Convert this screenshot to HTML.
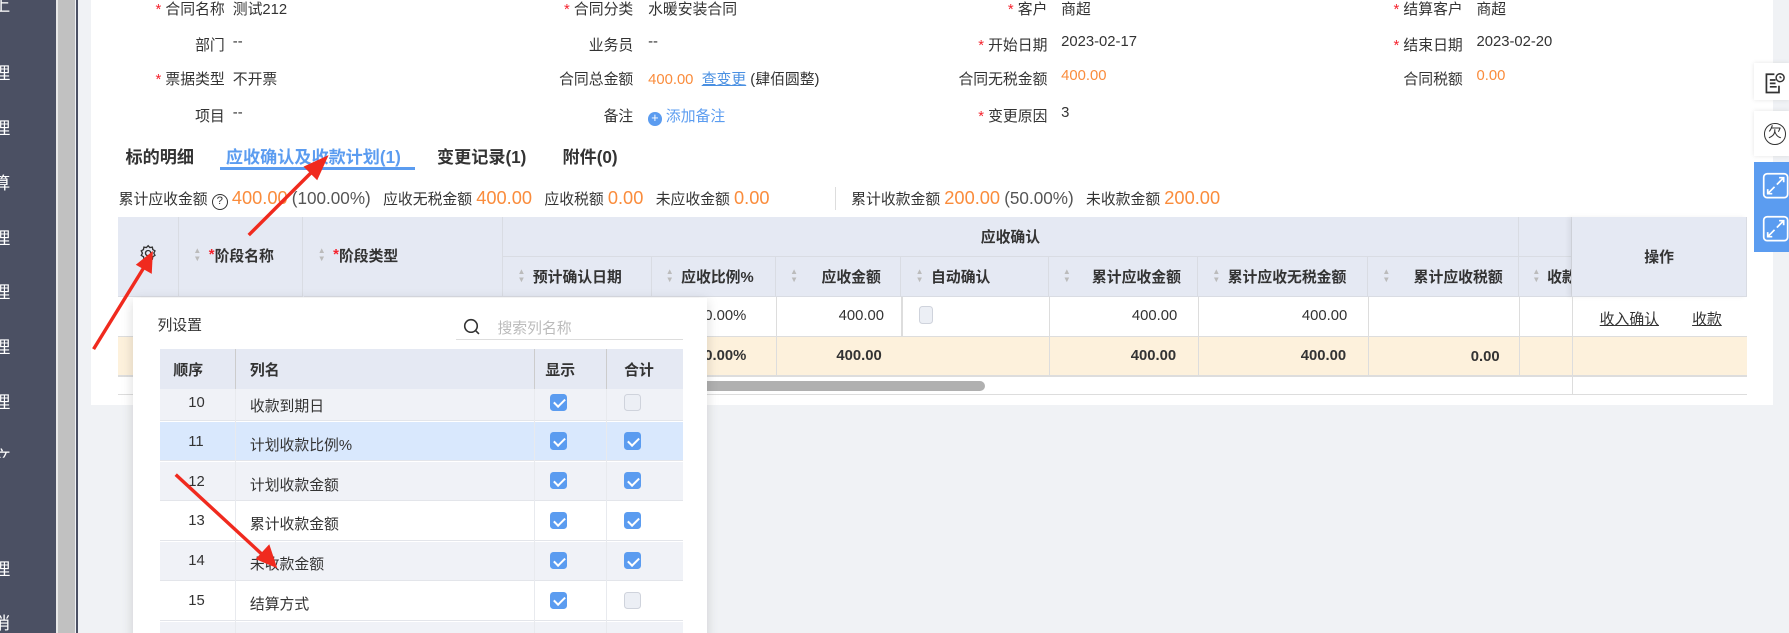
<!DOCTYPE html>
<html><head><meta charset="utf-8"><style>
*{box-sizing:border-box;margin:0;padding:0}
html,body{width:1789px;height:633px;overflow:hidden;background:#f0f2f5}
#w{zoom:1.141;width:1568px;height:555px;position:relative;font-family:"Liberation Sans","Noto Sans CJK SC",sans-serif;font-size:13px;color:#333;overflow:hidden}
.a{position:absolute;white-space:nowrap}
.sb{left:0;top:0;width:49px;height:555px;background:#4b5063}
.sbt{color:#fff;font-size:15px;left:-6px}
.r{color:#f5222d}
.or{color:#fa8c3c}
.lab{text-align:right;width:120px}
.th{background:#e5e9f3;font-weight:bold;color:#333}
.cell{position:absolute;border-right:1px solid #d9dce3;border-bottom:1px solid #d9dce3;display:flex;align-items:center;white-space:nowrap;overflow:hidden}
.sort{display:inline-block;width:8px;margin-right:6px;color:#bbb;font-size:7px;line-height:7px;text-align:center}
.cb{position:absolute;display:inline-block;width:15px;height:15px;border-radius:3px;background:#5b9cf0}
.cb:after{content:"";position:absolute;left:5px;top:2px;width:4px;height:8px;border:solid #fff;border-width:0 2px 2px 0;transform:rotate(45deg)}
.cbe{position:absolute;display:inline-block;width:15px;height:15px;border-radius:3px;background:#eceff5;border:1px solid #cfd3dc}
</style></head><body><div id="w">
<div class="a sb"></div>
<div class="a sbt" style="top:-8px">上</div>
<div class="a sbt" style="top:52px">理</div>
<div class="a sbt" style="top:100px">理</div>
<div class="a sbt" style="top:148px">算</div>
<div class="a sbt" style="top:196px">理</div>
<div class="a sbt" style="top:244px">理</div>
<div class="a sbt" style="top:292px">理</div>
<div class="a sbt" style="top:340px">理</div>
<div class="a sbt" style="top:388px;clip-path:inset(0 0 40% 0)">文</div>
<div class="a sbt" style="top:486px">理</div>
<div class="a sbt" style="top:534px">消</div>
<div class="a" style="left:49px;top:0;width:2px;height:555px;background:#e8e8e8"></div>
<div class="a" style="left:51px;top:0;width:15px;height:555px;background:#c1c1c1"></div>
<div class="a" style="left:67px;top:0;width:1px;height:555px;background:#4b5063"></div>
<div class="a" style="left:80px;top:0;width:1474px;height:355px;background:#fff"></div>

<!-- form -->
<div class="a lab" style="left:77px;top:-2px"><span class="r">* </span>合同名称</div><div class="a" style="left:204px;top:-2px">测试212</div>
<div class="a lab" style="left:435px;top:-2px"><span class="r">* </span>合同分类</div><div class="a" style="left:568px;top:-2px">水暖安装合同</div>
<div class="a lab" style="left:798px;top:-2px"><span class="r">* </span>客户</div><div class="a" style="left:930px;top:-2px">商超</div>
<div class="a lab" style="left:1162px;top:-2px"><span class="r">* </span>结算客户</div><div class="a" style="left:1294px;top:-2px">商超</div>

<div class="a lab" style="left:77px;top:30px">部门</div><div class="a" style="left:204px;top:30px">--</div>
<div class="a lab" style="left:435px;top:30px">业务员</div><div class="a" style="left:568px;top:30px">--</div>
<div class="a lab" style="left:798px;top:30px"><span class="r">* </span>开始日期</div><div class="a" style="left:930px;top:30px">2023-02-17</div>
<div class="a lab" style="left:1162px;top:30px"><span class="r">* </span>结束日期</div><div class="a" style="left:1294px;top:30px">2023-02-20</div>

<div class="a lab" style="left:77px;top:60px"><span class="r">* </span>票据类型</div><div class="a" style="left:204px;top:60px">不开票</div>
<div class="a lab" style="left:435px;top:60px">合同总金额</div><div class="a" style="left:568px;top:60px"><span class="or">400.00</span> &nbsp;<span style="color:#4a90e2;text-decoration:underline">查变更</span> (肆佰圆整)</div>
<div class="a lab" style="left:798px;top:60px">合同无税金额</div><div class="a or" style="left:930px;top:60px">400.00</div>
<div class="a lab" style="left:1162px;top:60px">合同税额</div><div class="a or" style="left:1294px;top:60px">0.00</div>

<div class="a lab" style="left:77px;top:92px">项目</div><div class="a" style="left:204px;top:92px">--</div>
<div class="a lab" style="left:435px;top:92px">备注</div>
<div class="a" style="left:568px;top:92px;color:#5b9cf0"><span style="display:inline-block;width:12px;height:12px;border-radius:50%;background:#5b9cf0;color:#fff;font-size:11px;line-height:12px;text-align:center;vertical-align:-1px">+</span> 添加备注</div>
<div class="a lab" style="left:798px;top:92px"><span class="r">* </span>变更原因</div><div class="a" style="left:930px;top:92px">3</div>

<!-- tabs -->
<div class="a" style="left:110px;top:125px;font-size:15px;font-weight:bold">标的明细</div>
<div class="a" style="left:198px;top:125px;font-size:15px;font-weight:bold;color:#5b9cf0">应收确认及收款计划(1)</div>
<div class="a" style="left:193px;top:146px;width:171px;height:3px;background:#5b9cf0"></div>
<div class="a" style="left:383px;top:125px;font-size:15px;font-weight:bold">变更记录(1)</div>
<div class="a" style="left:493px;top:125px;font-size:15px;font-weight:bold">附件(0)</div>

<!-- summary -->
<div class="a" style="left:104px;top:164px">累计应收金额 <span style="display:inline-block;width:14px;height:14px;border:1px solid #333;border-radius:50%;font-size:10px;line-height:12px;text-align:center">?</span> <span class="or" style="font-size:16px">400.00</span> <span style="font-size:15px;color:#555">(100.00%)</span>&nbsp;&nbsp; 应收无税金额 <span class="or" style="font-size:16px">400.00</span>&nbsp;&nbsp; 应收税额 <span class="or" style="font-size:16px">0.00</span>&nbsp;&nbsp; 未应收金额 <span class="or" style="font-size:16px">0.00</span></div>
<div class="a" style="left:732px;top:164px;width:1px;height:20px;background:#ddd"></div>
<div class="a" style="left:746px;top:164px">累计收款金额 <span class="or" style="font-size:16px">200.00</span> <span style="font-size:15px;color:#555">(50.00%)</span>&nbsp;&nbsp; 未收款金额 <span class="or" style="font-size:16px">200.00</span></div>

<!-- table -->
<div class="a" style="left:103px;top:190px;width:1428px;height:70px;background:#e5e9f3"></div>
<div class="a" style="left:103px;top:260px;width:1428px;height:35px;background:#fff;border-bottom:1px solid #ddd"></div>
<div class="a" style="left:103px;top:295px;width:1428px;height:35px;background:#fdf1dc;border-bottom:2px solid #ddd"></div>
<div class="a" style="left:103px;top:330px;width:1428px;height:16px;background:#fff;border-bottom:1px solid #ddd"></div>
<div class="a" style="left:600px;top:334px;width:263px;height:9px;border-radius:5px;background:#b0b0b0"></div>

<div class="cell th" style="left:103px;top:190px;width:54px;height:70px;justify-content:center"><svg width="16" height="16" viewBox="0 0 16 16" style="margin-top:-6px"><path d="M8 1.5l1.5 1.6 2.2-.3.4 2.1 1.9 1.1-1 2 1 2-1.9 1.1-.4 2.1-2.2-.3L8 14.5l-1.5-1.6-2.2.3-.4-2.1-1.9-1.1 1-2-1-2 1.9-1.1.4-2.1 2.2.3z" fill="none" stroke="#333" stroke-width="1.2"/><circle cx="8" cy="8" r="2.3" fill="none" stroke="#333" stroke-width="1.2"/></svg></div>
<div class="cell th" style="left:157px;top:190px;width:109px;height:70px;padding-left:12px;padding-bottom:2px"><span class="sort">▲<br>▼</span><span class="r">*</span>阶段名称</div>
<div class="cell th" style="left:266px;top:190px;width:175px;height:70px;padding-left:12px;padding-bottom:2px"><span class="sort">▲<br>▼</span><span class="r">*</span>阶段类型</div>
<div class="cell th" style="left:441px;top:190px;width:890px;height:35px;justify-content:center">应收确认</div>
<div class="cell th" style="left:1331px;top:190px;width:47px;height:35px"></div>
<div class="cell th" style="left:441px;top:225px;width:130px;height:35px;padding-left:12px"><span class="sort">▲<br>▼</span>预计确认日期</div>
<div class="cell th" style="left:571px;top:225px;width:109px;height:35px;padding-left:12px"><span class="sort">▲<br>▼</span>应收比例%</div>
<div class="cell th" style="left:680px;top:225px;width:110px;height:35px;padding-left:12px"><span class="sort">▲<br>▼</span><span style="margin-left:14px">应收金额</span></div>
<div class="cell th" style="left:790px;top:225px;width:129px;height:35px;padding-left:12px"><span class="sort">▲<br>▼</span>自动确认</div>
<div class="cell th" style="left:919px;top:225px;width:131px;height:35px;padding-left:12px"><span class="sort">▲<br>▼</span><span style="margin-left:12px">累计应收金额</span></div>
<div class="cell th" style="left:1050px;top:225px;width:149px;height:35px;padding-left:12px"><span class="sort">▲<br>▼</span>累计应收无税金额</div>
<div class="cell th" style="left:1199px;top:225px;width:132px;height:35px;padding-left:12px"><span class="sort">▲<br>▼</span><span style="margin-left:14px">累计应收税额</span></div>
<div class="cell th" style="left:1331px;top:225px;width:47px;height:35px;padding-left:12px"><span class="sort">▲<br>▼</span>收款</div>
<div class="cell th" style="left:1378px;top:190px;width:153px;height:70px;justify-content:center;box-shadow:-3px 0 4px rgba(0,0,0,.06)">操作</div>

<div class="a" style="left:790px;top:260px;height:35px;width:1px;background:#ddd"></div>
<div class="a" style="left:919px;top:260px;height:70px;width:1px;background:#ddd"></div>
<div class="a" style="left:1050px;top:260px;height:70px;width:1px;background:#ddd"></div>
<div class="a" style="left:1199px;top:260px;height:70px;width:1px;background:#ddd"></div>
<div class="a" style="left:1331px;top:260px;height:70px;width:1px;background:#ddd"></div>
<div class="a" style="left:1378px;top:260px;height:86px;width:1px;background:#ddd"></div>
<div class="a" style="left:680px;top:260px;height:70px;width:1px;background:#ddd"></div>
<div class="a" style="left:610px;top:270px">00.00%</div>
<div class="a" style="left:735px;top:270px">400.00</div>
<div class="cbe" style="left:805px;top:268px;width:13px;height:16px"></div>
<div class="a" style="left:992px;top:270px">400.00</div>
<div class="a" style="left:1141px;top:270px">400.00</div>
<div class="a" style="left:1402px;top:270px;text-decoration:underline">收入确认</div>
<div class="a" style="left:1483px;top:270px;text-decoration:underline">收款</div>
<div class="a" style="left:610px;top:305px;font-weight:bold">00.00%</div>
<div class="a" style="left:733px;top:305px;font-weight:bold">400.00</div>
<div class="a" style="left:991px;top:305px;font-weight:bold">400.00</div>
<div class="a" style="left:1140px;top:305px;font-weight:bold">400.00</div>
<div class="a" style="left:1289px;top:306px;font-weight:bold">0.00</div>

<!-- popup -->
<div class="a" style="left:117px;top:261px;width:503px;height:300px;background:#fff;box-shadow:0 2px 10px rgba(0,0,0,.15)"></div>
<div class="a" style="left:138px;top:275px">列设置</div>
<svg class="a" style="left:406px;top:279px" width="16" height="16" viewBox="0 0 16 16"><circle cx="7" cy="7" r="5.5" fill="none" stroke="#333" stroke-width="1.4"/><path d="M11 11l3 3" stroke="#333" stroke-width="1.4"/></svg>
<div class="a" style="left:436px;top:278px;color:#bbb">搜索列名称</div>
<div class="a" style="left:400px;top:297px;width:199px;height:1px;background:#ddd"></div>
<div class="a" style="left:140px;top:306px;width:459px;height:35px;background:#e5e9f3"></div>
<div class="a" style="left:206px;top:306px;width:1px;height:35px;background:#ccc"></div>
<div class="a" style="left:468px;top:306px;width:1px;height:35px;background:#ccc"></div>
<div class="a" style="left:531px;top:306px;width:1px;height:35px;background:#ccc"></div>
<div class="a" style="left:152px;top:315px;font-weight:bold">顺序</div>
<div class="a" style="left:219px;top:315px;font-weight:bold">列名</div>
<div class="a" style="left:478px;top:315px;font-weight:bold">显示</div>
<div class="a" style="left:547px;top:315px;font-weight:bold">合计</div>

<div class="a" style="left:140px;top:341px;width:459px;height:28px;background:#f0f2f7;border-bottom:1px solid #e3e5ea"></div>
<div class="a" style="left:165px;top:346px">10</div><div class="a" style="left:219px;top:346px">收款到期日</div>
<div class="cb" style="left:482px;top:345px"></div><div class="cbe" style="left:547px;top:345px"></div>

<div class="a" style="left:140px;top:370px;width:459px;height:34px;background:#d9e8fd;border-bottom:1px solid #e3e5ea"></div>
<div class="a" style="left:165px;top:380px">11</div><div class="a" style="left:219px;top:380px">计划收款比例%</div>
<div class="cb" style="left:482px;top:379px"></div><div class="cb" style="left:547px;top:379px"></div>

<div class="a" style="left:140px;top:405px;width:459px;height:34px;background:#f0f2f7;border-bottom:1px solid #e3e5ea"></div>
<div class="a" style="left:165px;top:415px">12</div><div class="a" style="left:219px;top:415px">计划收款金额</div>
<div class="cb" style="left:482px;top:414px"></div><div class="cb" style="left:547px;top:414px"></div>

<div class="a" style="left:140px;top:440px;width:459px;height:34px;background:#fff;border-bottom:1px solid #e3e5ea"></div>
<div class="a" style="left:165px;top:450px">13</div><div class="a" style="left:219px;top:450px">累计收款金额</div>
<div class="cb" style="left:482px;top:449px"></div><div class="cb" style="left:547px;top:449px"></div>

<div class="a" style="left:140px;top:475px;width:459px;height:34px;background:#f0f2f7;border-bottom:1px solid #e3e5ea"></div>
<div class="a" style="left:165px;top:485px">14</div><div class="a" style="left:219px;top:485px">未收款金额</div>
<div class="cb" style="left:482px;top:484px"></div><div class="cb" style="left:547px;top:484px"></div>

<div class="a" style="left:140px;top:510px;width:459px;height:34px;background:#fff;border-bottom:1px solid #e3e5ea"></div>
<div class="a" style="left:165px;top:520px">15</div><div class="a" style="left:219px;top:520px">结算方式</div>
<div class="cb" style="left:482px;top:519px"></div><div class="cbe" style="left:547px;top:519px"></div>
<div class="a" style="left:140px;top:545px;width:459px;height:20px;background:#f0f2f7"></div>
<div class="a" style="left:206px;top:341px;width:1px;height:220px;background:#e8eaee"></div>
<div class="a" style="left:468px;top:341px;width:1px;height:220px;background:#e8eaee"></div>
<div class="a" style="left:531px;top:341px;width:1px;height:220px;background:#e8eaee"></div>

<!-- right floating -->
<div class="a" style="left:1537px;top:55px;width:31px;height:33px;background:#fff;box-shadow:0 0 4px rgba(0,0,0,.1)"></div>
<svg class="a" style="left:1545px;top:63px" width="20" height="20" viewBox="0 0 20 20"><path d="M10 2H3v16h11v-6" fill="none" stroke="#333" stroke-width="1.5"/><path d="M6 7h5M6 10h5M6 13h6" stroke="#333" stroke-width="1.5"/><circle cx="15" cy="5" r="3.5" fill="#fff" stroke="#333" stroke-width="1.3"/><path d="M15 3.5V5h1.3" stroke="#333" stroke-width="1" fill="none"/></svg>
<div class="a" style="left:1537px;top:97px;width:31px;height:40px;background:#fff;box-shadow:0 0 4px rgba(0,0,0,.1)"></div>
<div class="a" style="left:1546px;top:108px;width:19px;height:19px;border:1.3px solid #333;border-radius:50%;font-size:12px;line-height:16px;text-align:center">欠</div>
<div class="a" style="left:1537px;top:142px;width:31px;height:79px;background:#5b9cf0"></div>
<svg class="a" style="left:1544px;top:151px" width="24" height="24" viewBox="0 0 24 24"><rect x="1.5" y="1.5" width="21" height="21" rx="3" fill="none" stroke="#fff" stroke-width="1.5"/><path d="M13 11l6-6M15 5h4v4M11 13l-6 6M5 15v4h4" stroke="#fff" stroke-width="1.5" fill="none"/></svg>
<svg class="a" style="left:1544px;top:188px" width="24" height="24" viewBox="0 0 24 24"><rect x="1.5" y="1.5" width="21" height="21" rx="3" fill="none" stroke="#fff" stroke-width="1.5"/><path d="M13 11l6-6M15 5h4v4M11 13l-6 6M5 15v4h4" stroke="#fff" stroke-width="1.5" fill="none"/></svg>

<!-- arrows -->
<svg class="a" style="left:0;top:0" width="1568" height="555">
<path d="M218 206L276 148" stroke="#f02a1e" stroke-width="3"/><path d="M288 136L266 146L278 158Z" fill="#f02a1e"/>
<path d="M82 306L127 233" stroke="#f02a1e" stroke-width="3"/><path d="M134 220L119 232L133 240Z" fill="#f02a1e"/>
<path d="M154 416L232 488" stroke="#f02a1e" stroke-width="3"/><path d="M243 498L236 477L224 490Z" fill="#f02a1e"/>
</svg>
</div></body></html>
